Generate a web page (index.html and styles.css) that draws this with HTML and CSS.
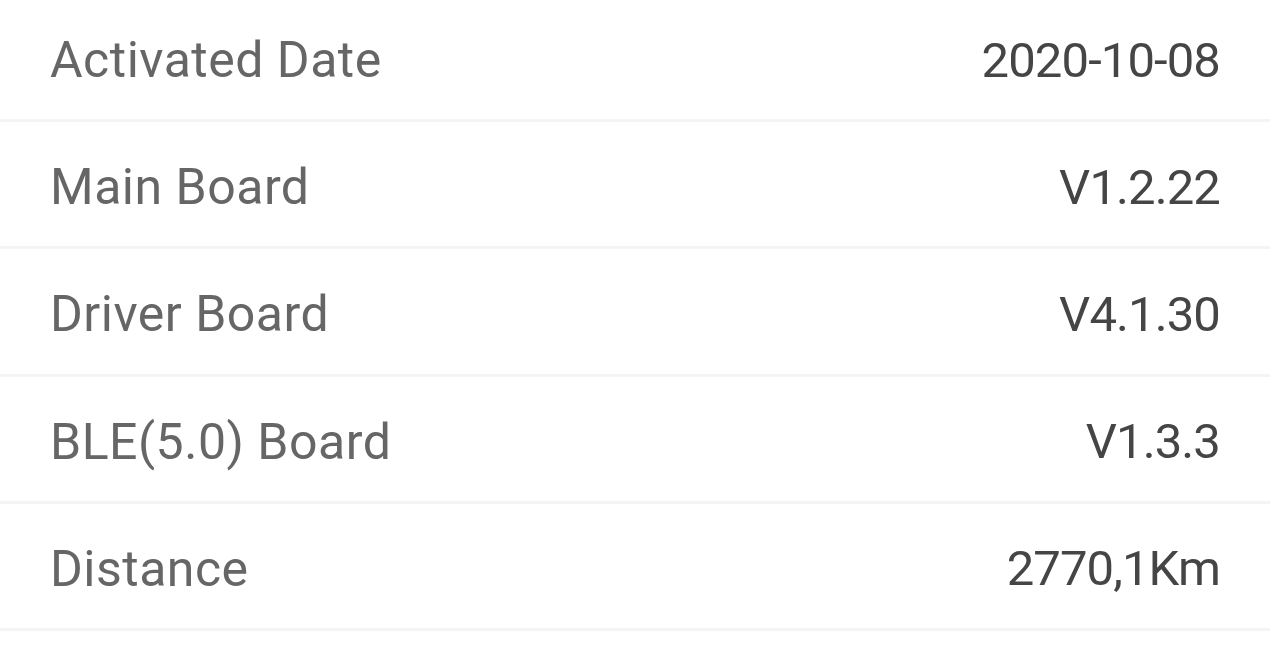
FILE: index.html
```html
<!DOCTYPE html>
<html>
<head>
<meta charset="utf-8">
<link rel="stylesheet" href="styles.css">
</head>
<body>
<div class="list">
  <div class="row"><span class="label">Activated Date</span><span class="value">2020-10-08</span></div>
  <div class="row"><span class="label">Main Board</span><span class="value">V1.2.22</span></div>
  <div class="row"><span class="label">Driver Board</span><span class="value">V4.1.30</span></div>
  <div class="row"><span class="label">BLE(5.0) Board</span><span class="value">V1.3.3</span></div>
  <div class="row"><span class="label">Distance</span><span class="value">2770,1Km</span></div>
</div>
</body>
</html>
```
FILE: styles.css
```css
html, body {
  margin: 0;
  padding: 0;
  background: #ffffff;
  overflow: hidden;
}
.list {
  margin-top: -5px;
  font-family: Roboto, "Noto Sans", sans-serif;
}
.row {
  box-sizing: border-box;
  height: 127.2px;
  display: flex;
  align-items: center;
  justify-content: space-between;
  padding: 6px 50px 0 50px;
  border-bottom: 3px solid #f4f4f4;
}
.label {
  font-size: 50px;
  letter-spacing: 0.5px;
  color: #666666;
}
.value {
  font-size: 49px;
  letter-spacing: -0.9px;
  color: #454545;
}
```
